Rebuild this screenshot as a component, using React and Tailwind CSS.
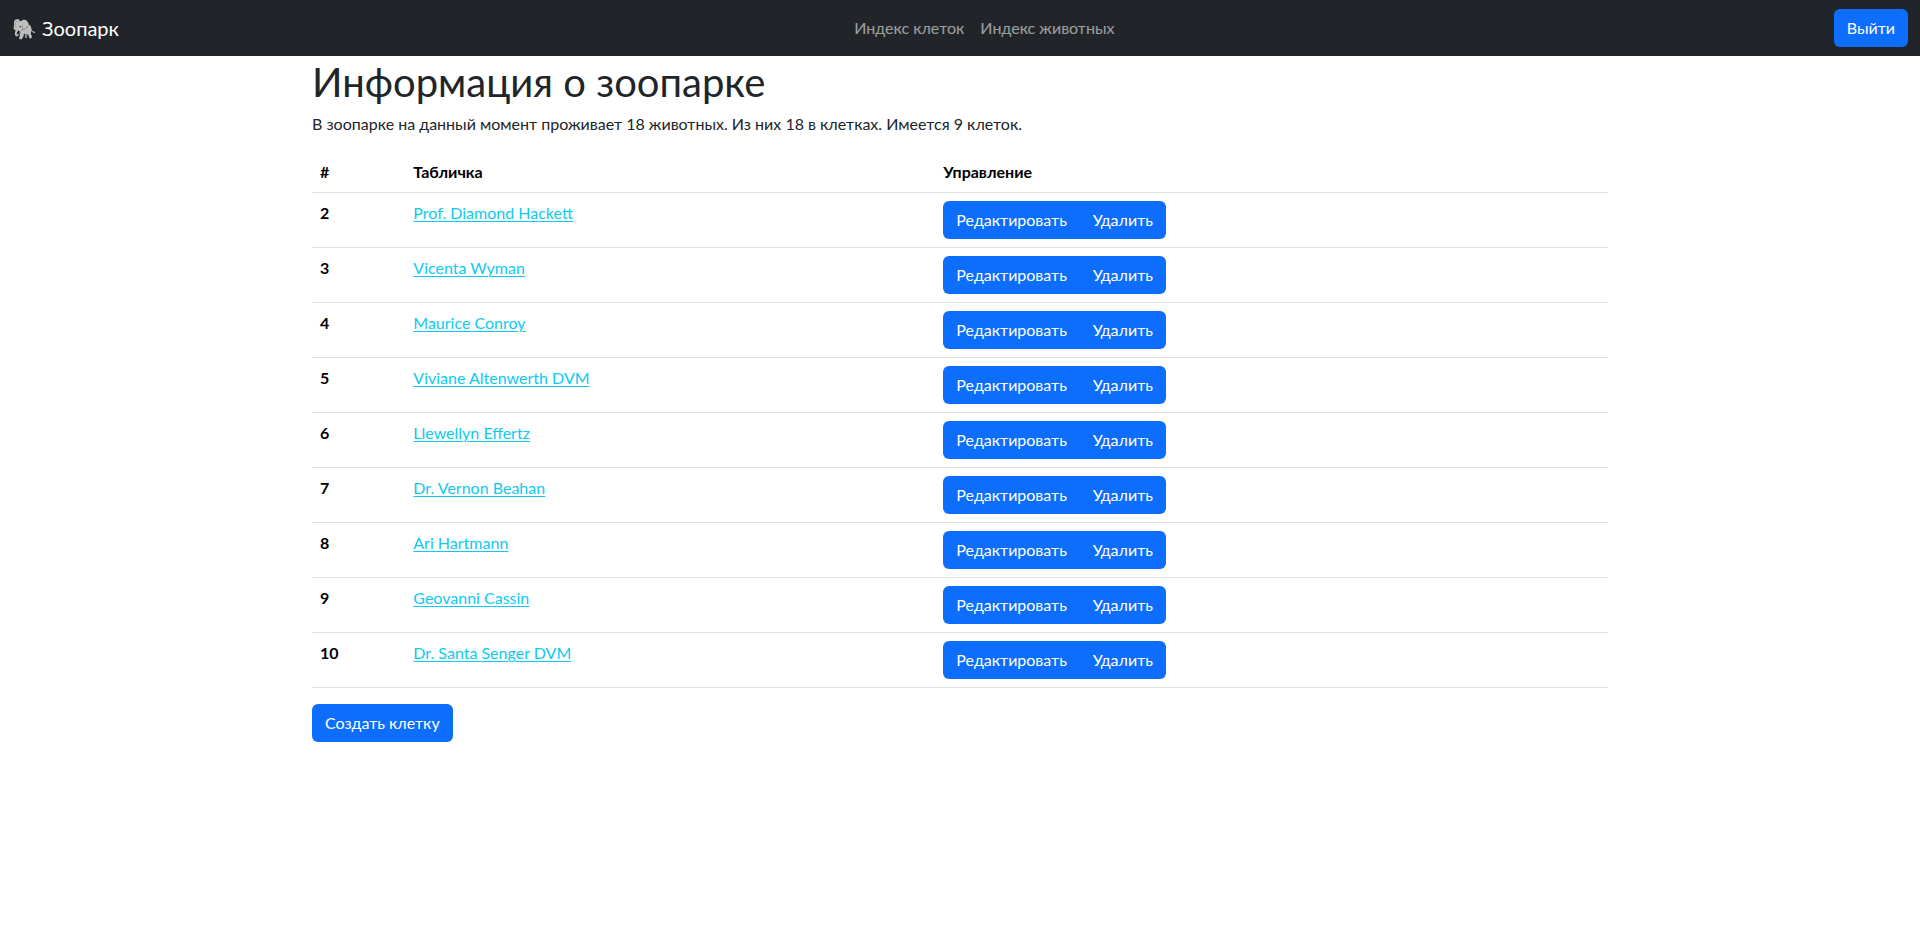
const cages = [
  { id: 2, name: 'Prof. Diamond Hackett' },
  { id: 3, name: 'Vicenta Wyman' },
  { id: 4, name: 'Maurice Conroy' },
  { id: 5, name: 'Viviane Altenwerth DVM' },
  { id: 6, name: 'Llewellyn Effertz' },
  { id: 7, name: 'Dr. Vernon Beahan' },
  { id: 8, name: 'Ari Hartmann' },
  { id: 9, name: 'Geovanni Cassin' },
  { id: 10, name: 'Dr. Santa Senger DVM' },
];

function Button({ className = 'rounded-md', children }) {
  return (
    <button
      type="button"
      className={`h-[38px] cursor-pointer bg-[#0d6efd] px-[13px] text-base text-white hover:bg-[#0b5ed7] ${className}`}
    >
      {children}
    </button>
  );
}

function Navbar() {
  return (
    <nav className="flex h-14 items-center bg-[#212529] px-3">
      <a href="#" className="mr-4 text-xl text-white">
        🐘 Зоопарк
      </a>
      <ul className="mx-auto flex">
        <li>
          <a href="#cages" className="px-2 py-2 text-white/55 hover:text-white/75">
            Индекс клеток
          </a>
        </li>
        <li>
          <a href="#animals" className="px-2 py-2 text-white/55 hover:text-white/75">
            Индекс животных
          </a>
        </li>
      </ul>
      <Button>Выйти</Button>
    </nav>
  );
}

export default function App() {
  return (
    <div className="min-h-screen bg-white font-[Lato,'Noto_Sans',sans-serif] text-base text-[#212529]">
      <Navbar />
      <main className="mx-auto max-w-[1320px] px-3">
        <h1 className="mb-1 text-[40px] leading-[52px]">Информация о зоопарке</h1>
        <p className="mb-4">
          В зоопарке на данный момент проживает 18 животных. Из них 18 в клетках. Имеется 9 клеток.
        </p>
        <table className="mb-4 w-full table-fixed text-left align-top text-black">
          <thead>
            <tr className="border-b border-[#dee2e6]">
              <th scope="col" className="w-[7.2%] p-2">#</th>
              <th scope="col" className="w-[40.9%] p-2">Табличка</th>
              <th scope="col" className="p-2">Управление</th>
            </tr>
          </thead>
          <tbody>
            {cages.map((cage) => (
              <tr key={cage.id} className="border-b border-[#dee2e6] align-top">
                <th scope="row" className="p-2">{cage.id}</th>
                <td className="p-2">
                  <a href={`#cage-${cage.id}`} className="text-[#0dcaf0] underline decoration-1 underline-offset-2">
                    {cage.name}
                  </a>
                </td>
                <td className="p-2">
                  <div className="flex">
                    <Button className="rounded-l-md">Редактировать</Button>
                    <Button className="rounded-r-md">Удалить</Button>
                  </div>
                </td>
              </tr>
            ))}
          </tbody>
        </table>
        <Button>Создать клетку</Button>
      </main>
    </div>
  );
}
